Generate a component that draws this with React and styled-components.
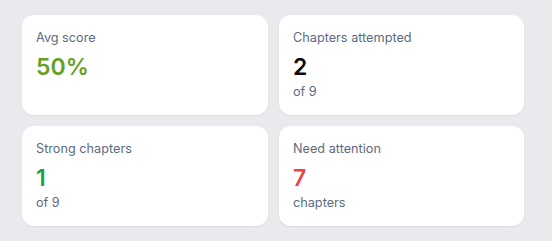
import styled, { createGlobalStyle } from 'styled-components'

const GlobalStyle = createGlobalStyle`
    html, body {
        margin: 0;
        padding: 0;
        background: #e8eaed;
        font-family: "Inter", "Liberation Sans", sans-serif;
    }
`

const Page = styled.main`
    padding: 15px 28px 15px 22px;
`

const Grid = styled.section`
    display: grid;
    grid-template-columns: 246px 245px;
    grid-auto-rows: 100px;
    gap: 11px;
`

const Card = styled.div`
    background: #fff;
    border-radius: 12px;
    box-shadow: 0 1px 2px rgba(15, 23, 42, 0.06);
    padding: 15px 14px;
    box-sizing: border-box;
    display: flex;
    flex-direction: column;
`

const Label = styled.div`
    color: #5e6a80;
    font-size: 12.7px;
    line-height: 16px;
`

const Value = styled.div`
    color: ${props => props.$color};
    font-size: 23px;
    font-weight: 600;
    line-height: 26px;
    margin-top: 8px;
`

const Sub = styled.div`
    color: #5e6a80;
    font-size: 12.7px;
    line-height: 16px;
    margin-top: 4px;
`

const stats = [
    { label: 'Avg score', value: '50%', color: '#65a11f' },
    { label: 'Chapters attempted', value: '2', color: '#0b0b0b', sub: 'of 9' },
    { label: 'Strong chapters', value: '1', color: '#16a34a', sub: 'of 9' },
    { label: 'Need attention', value: '7', color: '#ef4444', sub: 'chapters' },
]

function App() {
    return (
        <>
            <GlobalStyle />
            <Page>
                <Grid>
                    {stats.map(stat => (
                        <Card key={stat.label}>
                            <Label>{stat.label}</Label>
                            <Value $color={stat.color}>{stat.value}</Value>
                            {stat.sub && <Sub>{stat.sub}</Sub>}
                        </Card>
                    ))}
                </Grid>
            </Page>
        </>
    )
}

export default App
